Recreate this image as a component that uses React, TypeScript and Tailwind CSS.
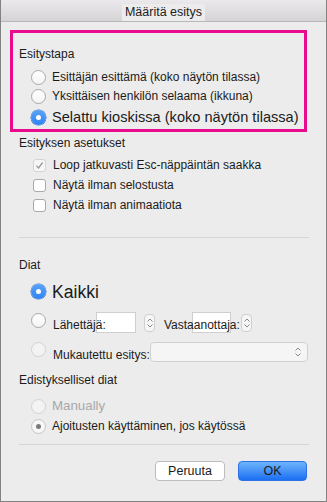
import React from "react";

type RadioState = "off" | "on" | "disabled" | "dot";

const Radio: React.FC<{ state: RadioState }> = ({ state }) => {
   if (state === "on") {
      return (
         <span className="flex h-[15px] w-[15px] shrink-0 items-center justify-center rounded-full bg-gradient-to-b from-[#5aa2f7] to-[#2f84f2] shadow-[0_0_0_0.5px_#2a73d8]">
            <span className="h-[5px] w-[5px] rounded-full bg-white" />
         </span>
      );
   }
   if (state === "disabled") {
      return (
         <span className="block h-[15px] w-[15px] shrink-0 rounded-full border border-[#d2d2d2] bg-[#f3f3f3]" />
      );
   }
   if (state === "dot") {
      return (
         <span className="flex h-[15px] w-[15px] shrink-0 items-center justify-center rounded-full border border-[#c4c4c4] bg-[#f7f7f7]">
            <span className="h-[5px] w-[5px] rounded-full bg-[#7a7a7a]" />
         </span>
      );
   }
   return (
      <span className="block h-[15px] w-[15px] shrink-0 rounded-full border border-[#a9a9a9] bg-gradient-to-b from-white to-[#f4f4f4]" />
   );
};

const Checkbox: React.FC<{ checked?: boolean; disabled?: boolean }> = ({
   checked,
   disabled,
}) => (
   <span
      className={
         disabled
            ? "flex h-[13px] w-[13px] shrink-0 items-center justify-center rounded-[3px] border border-[#d4d4d4] bg-[#f6f6f6]"
            : "flex h-[13px] w-[13px] shrink-0 items-center justify-center rounded-[3px] border border-[#a9a9a9] bg-white"
      }
   >
      {checked && (
         <svg width="9" height="9" viewBox="0 0 9 9">
            <path
               d="M1.5 4.8 L3.6 7 L7.6 1.5"
               fill="none"
               stroke="#9a9a9a"
               strokeWidth="1.3"
            />
         </svg>
      )}
   </span>
);

const Chevrons: React.FC = () => (
   <svg width="8" height="12" viewBox="0 0 8 12">
      <path d="M1.5 4.5 L4 2 L6.5 4.5" fill="none" stroke="#8a8a8a" strokeWidth="1" />
      <path d="M1.5 7.5 L4 10 L6.5 7.5" fill="none" stroke="#8a8a8a" strokeWidth="1" />
   </svg>
);

const Spinner: React.FC<{ className?: string }> = ({ className }) => (
   <span
      className={
         "flex h-[18px] w-[11px] shrink-0 items-center justify-center rounded-[4px] border border-[#cfcfcf] bg-[#f6f6f6] " +
         (className ?? "")
      }
   >
      <Chevrons />
   </span>
);

const App: React.FC = () => {
   return (
      <div className="h-[502px] w-[327px] overflow-hidden border-x border-b border-[#828282] bg-[#ececec] font-['Liberation_Sans',Arial,sans-serif] text-[12px] leading-[16px] text-[#1b1b1b]">
         {/* title bar */}
         <div className="flex h-[22px] items-end justify-center border-b border-[#b8b8b8] bg-gradient-to-b from-[#ebe9eb] to-[#d5d3d5]">
            <span className="bg-[#ececec] px-[3px] text-[12.5px] leading-[17px] text-[#222]">
               Määritä esitys
            </span>
         </div>

         {/* highlighted group */}
         <div className="ml-[9px] mt-[8px] h-[102px] w-[297px] border-[3px] border-[#ea0b8c] pl-[6px]">
            <div className="mt-[13px] h-[16px]">Esitystapa</div>
            <div className="mt-[5px] flex h-[20px] items-center pl-[12px]">
               <Radio state="off" />
               <span className="ml-[6px]">Esittäjän esittämä (koko näytön tilassa)</span>
            </div>
            <div className="flex h-[18px] items-center pl-[12px]">
               <Radio state="off" />
               <span className="ml-[6px]">Yksittäisen henkilön selaama (ikkuna)</span>
            </div>
            <div className="flex h-[24px] items-center pl-[12px]">
               <Radio state="on" />
               <span className="ml-[6px] whitespace-nowrap text-[14.6px]">
                  Selattu kioskissa (koko näytön tilassa)
               </span>
            </div>
         </div>

         <div className="pl-[18px] pr-[18px]">
            <div className="mt-[3px] h-[16px]">Esityksen asetukset</div>
            <div className="mt-[4px] flex h-[20px] items-center pl-[14px]">
               <Checkbox checked disabled />
               <span className="ml-[7px]">Loop jatkuvasti Esc-näppäintän saakka</span>
            </div>
            <div className="flex h-[20px] items-center pl-[14px]">
               <Checkbox />
               <span className="ml-[7px]">Näytä ilman selostusta</span>
            </div>
            <div className="flex h-[20px] items-center pl-[14px]">
               <Checkbox />
               <span className="ml-[7px]">Näytä ilman animaatiota</span>
            </div>

            <div className="mt-[22px] h-px w-[290px] bg-[#d6d6d6]" />

            <div className="mt-[19px] h-[16px]">Diat</div>
            <div className="mt-[6px] flex h-[25px] items-center pl-[12px]">
               <Radio state="on" />
               <span className="ml-[6px] text-[17.6px] leading-[22px]">Kaikki</span>
            </div>

            <div className="mt-[8px] flex h-[22px] items-start pl-[12px]">
               <span className="mt-[1px] flex shrink-0">
                  <Radio state="off" />
               </span>
               <span className="relative z-10 ml-[7px] mt-[5px] w-[43px] shrink-0 whitespace-nowrap">
                  Lähettäjä:
               </span>
               <span className="h-[21px] w-[40px] shrink-0 border border-[#cfcfcf] bg-white" />
               <Spinner className="ml-[8px] mt-[2px]" />
               <span className="relative z-10 ml-[9px] mt-[5px] w-[28px] shrink-0 whitespace-nowrap">
                  Vastaanottaja:
               </span>
               <span className="h-[21px] w-[39px] shrink-0 border border-[#cfcfcf] bg-white" />
               <Spinner className="ml-[10px] mt-[2px]" />
            </div>

            <div className="mt-[8px] flex h-[21px] items-start pl-[12px]">
               <span className="flex shrink-0">
                  <Radio state="disabled" />
               </span>
               <span className="relative z-10 ml-[7px] mt-[5px] w-[97px] shrink-0 whitespace-nowrap">
                  Mukautettu esitys:
               </span>
               <span className="flex h-[20px] w-[158px] shrink-0 items-center justify-end rounded-[4px] border border-[#d0d0d0] bg-[#f5f5f5] pr-[5px]">
                  <Chevrons />
               </span>
            </div>

            <div className="mt-[9px] h-[16px]">Edistykselliset diat</div>
            <div className="mt-[8px] flex h-[20px] items-center pl-[12px]">
               <Radio state="disabled" />
               <span className="ml-[6px] text-[13.3px] text-[#a8a8a8]">Manually</span>
            </div>
            <div className="flex h-[20px] items-center pl-[12px]">
               <Radio state="dot" />
               <span className="ml-[6px]">Ajoitusten käyttäminen, jos käytössä</span>
            </div>

            <div className="mt-[8px] h-px w-[290px] bg-[#d6d6d6]" />

            <div className="mt-[16px] flex justify-end gap-[13px] pr-[1px]">
               <button className="h-[20px] w-[70px] rounded-[4px] border border-[#bcbcbc] bg-white text-[12.5px] text-[#1b1b1b]">
                  Peruuta
               </button>
               <button className="h-[20px] w-[69px] rounded-[4px] border border-[#2c72e6] bg-gradient-to-b from-[#6db4fb] to-[#1a6ef2] text-[12.5px] text-[#1b1b1b]">
                  OK
               </button>
            </div>
         </div>
      </div>
   );
};

export default App;
